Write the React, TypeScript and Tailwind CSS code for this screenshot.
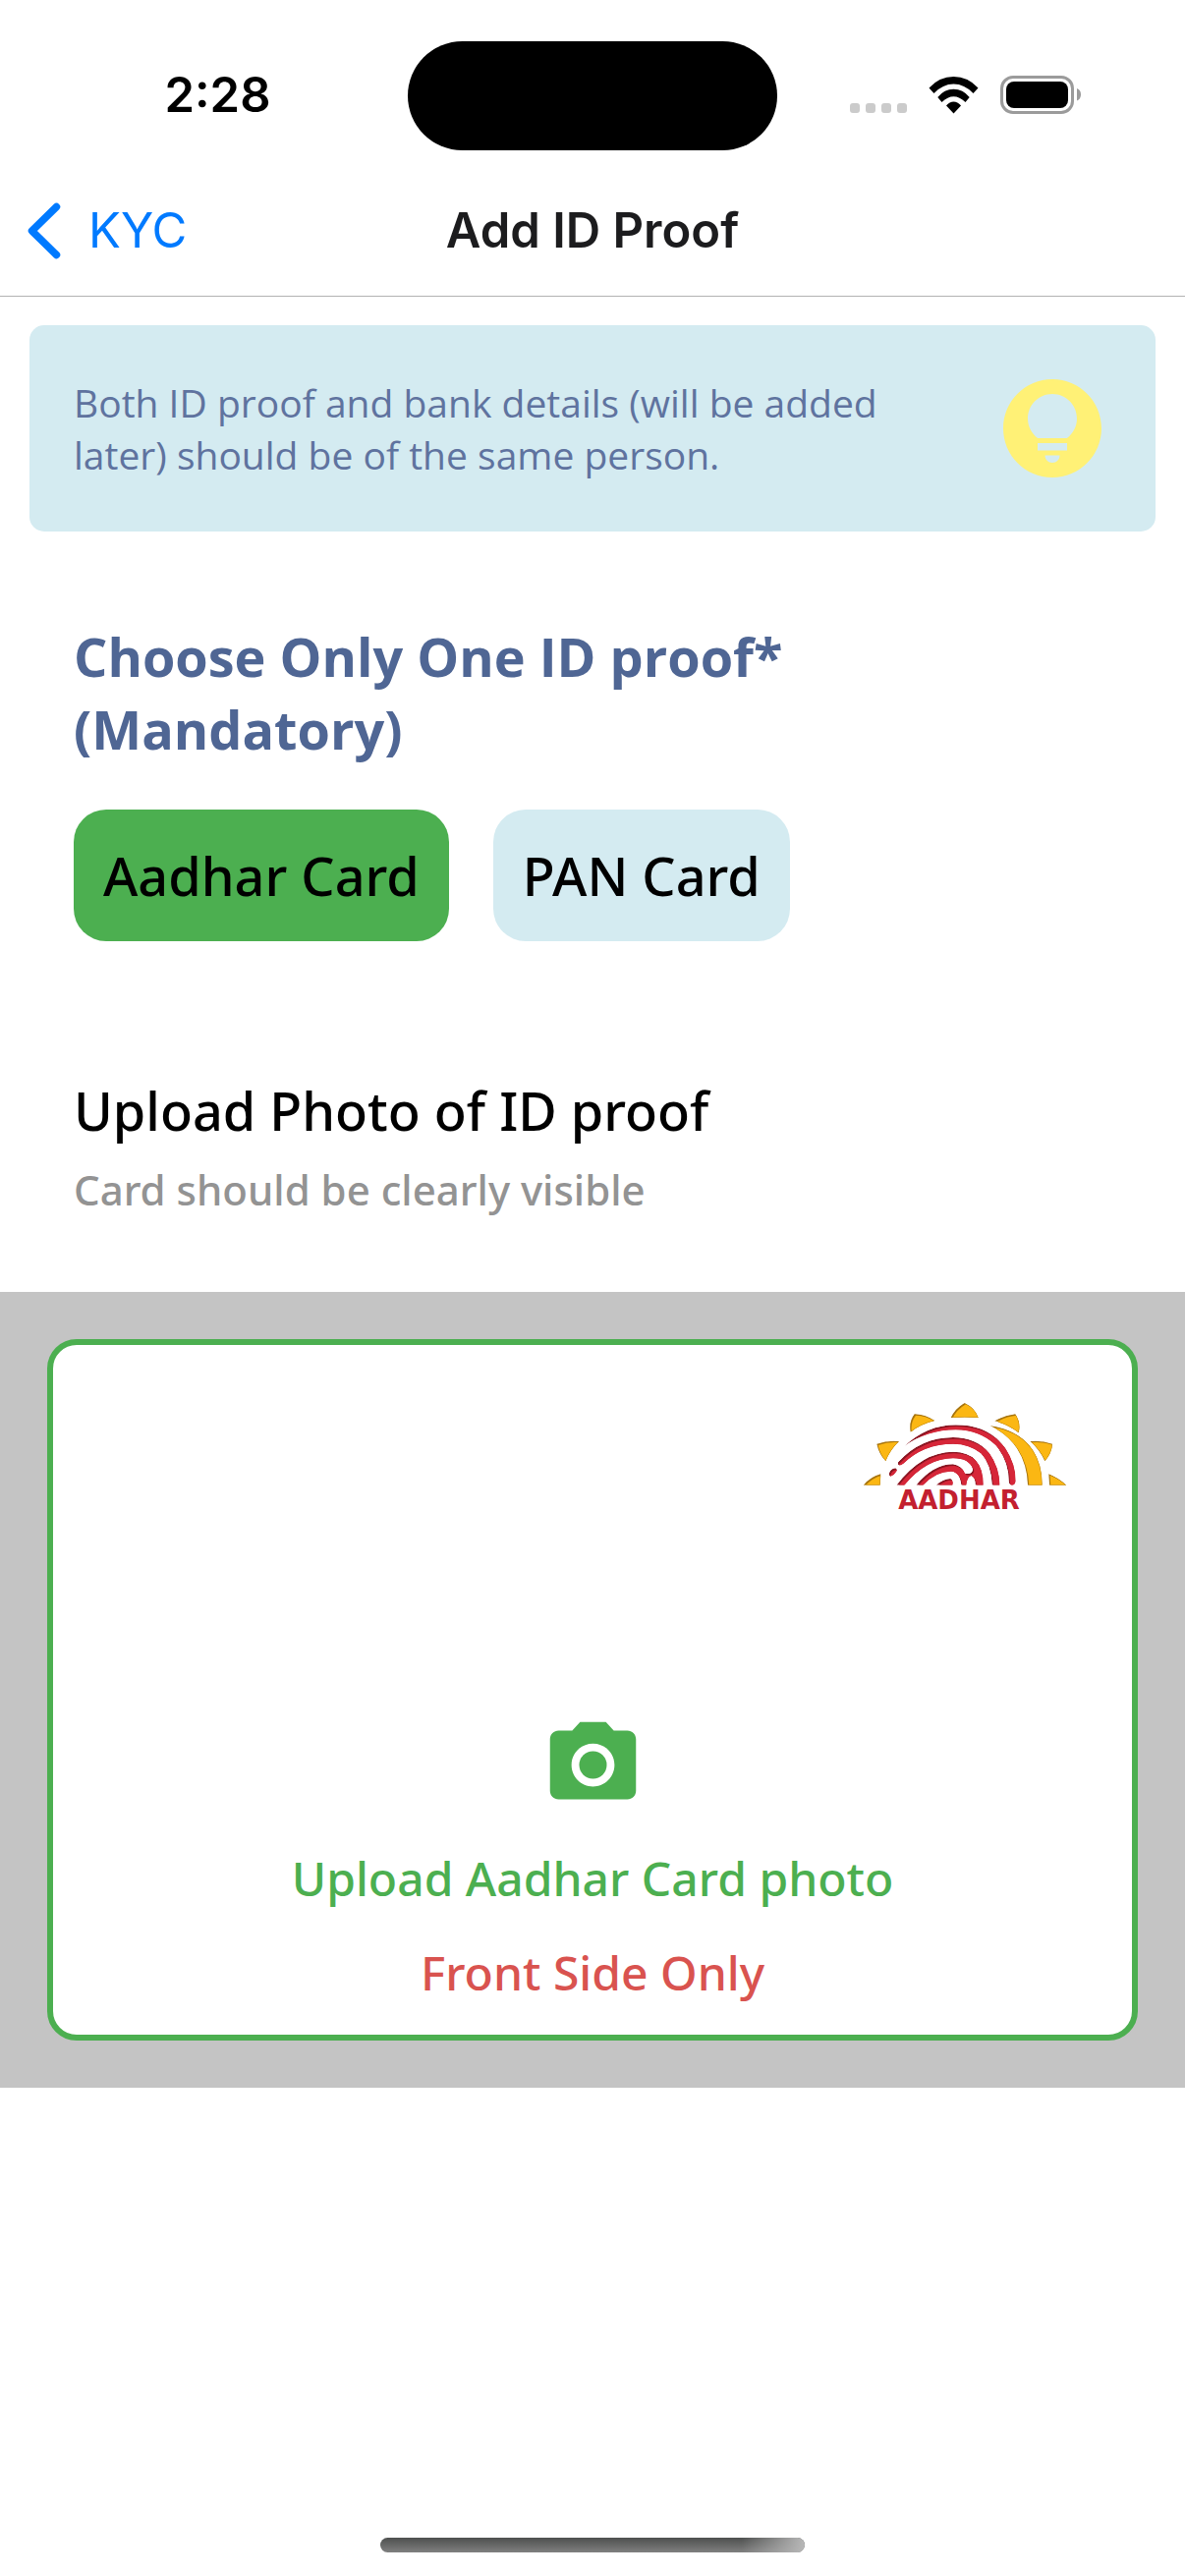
import { useState } from "react";
import { MdPhotoCamera } from "react-icons/md";

const petals = [
  "M323 128Q336 100 365 83Q397 98 407 128Q365 125 323 128z",
  "M212 117Q245 118 274 137Q230 148 200 172Q194 140 212 117z",
  "M520 117Q488 120 457 138Q500 150 530 174Q538 145 520 117z",
  "M97 208Q130 196 165 200Q138 225 124 261Q103 238 97 208z",
  "M633 208Q600 196 565 200Q594 225 610 261Q632 235 633 208z",
  "M56 334Q78 308 109 300L107 334z",
  "M622 300Q652 312 676 334L624 334z",
  "M444 153Q530 165 572 225Q602 270 602 334L558 334Q556 270 525 222Q495 178 444 153z",
].join("");

const ridges = [
  "M180 216Q250 150 338 150Q440 150 490 222Q521 270 521 322Q518 334 510 334Q501 334 500 322Q500 260 460 212Q410 165 338 165Q250 165 180 216z",
  "M162 264Q230 188 330 188Q400 188 440 235Q472 280 472 334L449 334Q446 270 415 237Q380 208 330 208Q240 208 178 268Q166 277 162 271z",
  "M134 300Q138 284 154 282Q162 286 156 293Q150 304 139 307Q133 305 134 300z",
  "M157 334Q235 232 330 232Q422 232 422 334L398 334Q398 310 385 305Q372 310 370 334L355 334Q350 294 325 292Q280 290 238 334L217 334Q270 270 330 270Q358 275 366 298Q388 302 390 286Q380 252 330 252Q250 252 181 334z",
  "M278 334Q300 314 322 314Q332 318 328 334z",
].join("");

function AadharLogo() {
  return (
    <div className="flex flex-col items-center">
      <svg className="w-[208px]" viewBox="54 80 624 256" aria-hidden="true">
        <clipPath id="petals">
          <path d={petals} />
        </clipPath>
        <clipPath id="ridges">
          <path d={ridges} />
        </clipPath>
        <g clipPath="url(#petals)">
          <path d={petals} fill="#a8750f" />
          <path d={petals} fill="#fbb713" transform="translate(4 4)" />
          <path d={petals} fill="none" stroke="#a8750f" strokeWidth="2" />
        </g>
        <g clipPath="url(#ridges)">
          <path d={ridges} fill="#8a1622" />
          <path d={ridges} fill="#d62638" transform="translate(4 5)" />
        </g>
      </svg>
      <span className="mr-3 font-['DejaVu_Sans',sans-serif] text-[26px] leading-[30px] font-bold text-[#c3202f]">
        AADHAR
      </span>
    </div>
  );
}

function StatusBar() {
  return (
    <div className="grid h-[177px] grid-cols-[1fr_376px_1fr] items-center pt-10 pb-[23px] font-['Inter',sans-serif]">
      <span className="pl-7 text-center text-[49px] leading-[60px] font-semibold">2:28</span>
      <div className="h-[111px] rounded-full bg-black" />
      <div className="flex items-center justify-center gap-[22px] pr-8 pb-[2px]">
        <svg className="h-[39px] w-[58px]" viewBox="0 0 58 39" fill="#cbcbcb" aria-label="No signal">
          <rect x="0" y="28" width="10" height="10" rx="3" />
          <rect x="16" y="28" width="10" height="10" rx="3" />
          <rect x="32" y="28" width="10" height="10" rx="3" />
          <rect x="48" y="28" width="10" height="10" rx="3" />
        </svg>
        <svg className="h-[39px] w-[51px]" viewBox="0 0 51 39" aria-label="Wi-Fi">
          <path d="M.5 12.500Q11 1 25.500 1T50.500 12.500L45.500 18Q36.500 8.500 25.500 8.500T5.500 18z" />
          <path d="M9.300 22Q16 13.800 25.500 13.800T41.700 22L37.500 27Q31.500 21.300 25.500 21.300T13.500 27z" />
          <path d="M18 30.500Q21.500 26.500 25.500 26.500T33 30.500L25.500 38.500z" />
        </svg>
        <svg className="h-[39px] w-[82px]" viewBox="0 0 82 39" aria-label="Battery full">
          <rect x="1.500" y="1.500" width="72" height="36" rx="11.500" fill="none" stroke="#9b9b9b" strokeWidth="3" />
          <rect x="6" y="6" width="63" height="27" rx="8" />
          <path d="M78 13q4 1.500 4 6.200t-4 6.300z" fill="#9b9b9b" />
        </svg>
      </div>
    </div>
  );
}

function NavBar() {
  return (
    <header className="grid h-[125px] grid-cols-[1fr_auto_1fr] items-center border-b border-[#b3b3b3] pb-2 font-['Inter',sans-serif] text-[49px] leading-[60px]">
      <a href="#kyc" className="flex items-center gap-7 pl-7 text-[#007aff]">
        <svg className="h-[58px] w-[34px]" viewBox="0 0 34 58" fill="none" stroke="currentColor" strokeWidth="7.500" strokeLinecap="round" strokeLinejoin="round" aria-hidden="true">
          <path d="M29.500 4.500L4.500 29L29.500 53.500" />
        </svg>
        KYC
      </a>
      <h1 className="font-semibold text-[#1c1c1e]">Add ID Proof</h1>
    </header>
  );
}

const documents = ["Aadhar Card", "PAN Card"];

export default function App() {
  const [selected, setSelected] = useState(documents[0]);

  return (
    <div className="flex min-h-screen flex-col bg-white font-['Noto_Sans',sans-serif] text-black">
      <StatusBar />
      <NavBar />

      <main>
        <section className="mx-[30px] mt-[29px] flex items-center justify-between rounded-[15px] bg-[#d4ebf1] p-[45px]">
          <p className="max-w-[860px] font-['Open_Sans',sans-serif] text-[39px] leading-[53px] text-[#5f739f]">
            Both ID proof and bank details (will be added later) should be of the same person.
          </p>
          <svg className="size-[120px] shrink-0" viewBox="0 0 24 24" fill="#fff176" aria-hidden="true">
            <path d="M12 2C6.480 2 2 6.480 2 12s4.480 10 10 10 10-4.480 10-10S17.520 2 12 2zm0 17c-.830 0-1.500-.670-1.500-1.500h3c0 .830-.670 1.500-1.500 1.500zm3-2.500H9V15h6v1.500zm-.030-2.500H9.030C7.800 13.090 7 11.640 7 10c0-2.760 2.240-5 5-5s5 2.240 5 5c0 1.640-.800 3.090-2.030 4z" />
          </svg>
        </section>

        <section className="px-[75px] pt-[90px]">
          <h2 className="font-['Open_Sans',sans-serif] text-[54px] leading-[74px] font-bold text-[#4f6694]">
            Choose Only One ID proof*
            <br />
            (Mandatory)
          </h2>
          <div className="mt-[45px] flex gap-[45px]">
            {documents.map((name) => (
              <button
                key={name}
                type="button"
                aria-pressed={selected === name}
                onClick={() => setSelected(name)}
                className={`rounded-[33px] p-[30px] text-[54px] leading-[74px] font-medium ${
                  selected === name ? "bg-[#4caf50]" : "bg-[#d4ebf1]"
                }`}
              >
                {name}
              </button>
            ))}
          </div>
        </section>

        <section className="px-[75px] pt-[135px] pb-[76px]">
          <h2 className="text-[54px] leading-[74px] font-medium">Upload Photo of ID proof</h2>
          <p className="mt-[15px] text-[42px] leading-[57px] font-medium text-[#939393]">Card should be clearly visible</p>
        </section>

        <section className="bg-[#c4c4c4] p-12">
          <button
            type="button"
            className="flex w-full flex-col items-center rounded-[30px] border-6 border-[#4caf50] bg-white px-[66px] pt-[58px] pb-[30px] text-[48px] leading-[66px] font-medium"
          >
            <span className="self-end">
              <AadharLogo />
            </span>
            <MdPhotoCamera className="mt-[202px] size-[105px] text-[#4caf50]" />
            <span className="mt-[30px] text-[#4caf50]">Upload Aadhar Card photo</span>
            <span className="mt-[30px] text-[#d9534f]">Front Side Only</span>
          </button>
        </section>
      </main>

      <footer className="mt-auto flex justify-center pb-6">
        <div className="h-[15px] w-[432px] overflow-hidden rounded-full bg-linear-to-b from-[#4e504f] to-[#808080]">
          <div className="ml-auto h-full w-16 bg-linear-to-r from-transparent to-[#b8b8b8]" />
        </div>
      </footer>
    </div>
  );
}
